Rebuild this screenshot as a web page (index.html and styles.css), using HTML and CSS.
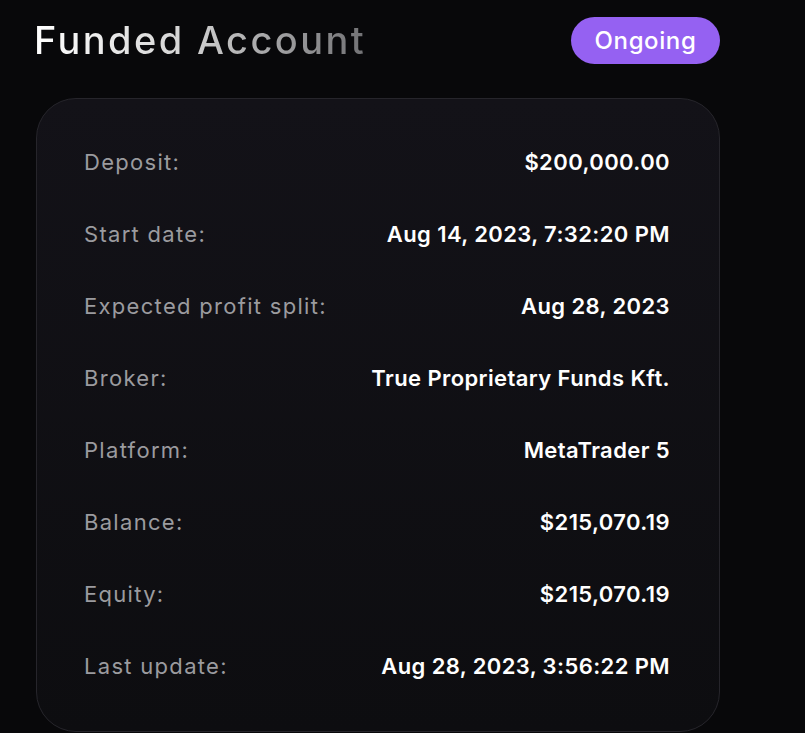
FILE: index.html
```html
<!DOCTYPE html>
<html>
<head>
<meta charset="utf-8">
<link rel="stylesheet" href="styles.css">
</head>
<body>
<div class="wrap">
  <div class="header">
    <h1 class="title">Funded Account</h1>
    <span class="pill">Ongoing</span>
  </div>
  <div class="card">
    <div class="row"><span class="label">Deposit:</span><span class="value">$200,000.00</span></div>
    <div class="row"><span class="label">Start date:</span><span class="value">Aug 14, 2023, 7:32:20 PM</span></div>
    <div class="row"><span class="label">Expected profit split:</span><span class="value">Aug 28, 2023</span></div>
    <div class="row"><span class="label">Broker:</span><span class="value">True Proprietary Funds Kft.</span></div>
    <div class="row"><span class="label">Platform:</span><span class="value">MetaTrader 5</span></div>
    <div class="row"><span class="label">Balance:</span><span class="value">$215,070.19</span></div>
    <div class="row"><span class="label">Equity:</span><span class="value">$215,070.19</span></div>
    <div class="row"><span class="label">Last update:</span><span class="value">Aug 28, 2023, 3:56:22 PM</span></div>
  </div>
</div>
</body>
</html>
```
FILE: styles.css
```css
html, body {
  margin: 0;
  padding: 0;
  background: #08080a;
  font-family: "Inter", sans-serif;
  height: 733px;
  overflow: hidden;
}
.wrap {
  margin-left: 36px;
  width: 684px;
}
.header {
  display: flex;
  justify-content: space-between;
  align-items: center;
  padding-top: 17px;
  height: 47px;
  margin-bottom: 34px;
}
.title {
  margin: 0;
  font-size: 38px;
  font-weight: 500;
  letter-spacing: 2.4px;
  background: linear-gradient(90deg, #ffffff 0%, #d4d4d4 45%, #717174 100%);
  -webkit-background-clip: text;
  background-clip: text;
  color: transparent;
  line-height: 47px;
  margin-left: -2px;
}
.pill {
  display: flex;
  align-items: center;
  justify-content: center;
  width: 149px;
  height: 47px;
  border-radius: 24px;
  background: #9561f2;
  color: #fff;
  font-size: 24px;
  font-weight: 500;
  letter-spacing: 0.6px;
}
.card {
  border: 1px solid #26252b;
  border-radius: 40px;
  background: linear-gradient(180deg, #131218 0%, #0d0d10 100%);
  padding: 27px 49px 29px 49px;
}
.row {
  height: 72px;
  display: flex;
  justify-content: space-between;
  align-items: center;
}
.label {
  color: #9b9b9f;
  font-size: 22px;
  font-weight: 400;
  letter-spacing: 1.3px;
  margin-left: -2px;
}
.value {
  color: #ffffff;
  font-size: 22px;
  font-weight: 600;
  letter-spacing: 0.4px;
}
```
